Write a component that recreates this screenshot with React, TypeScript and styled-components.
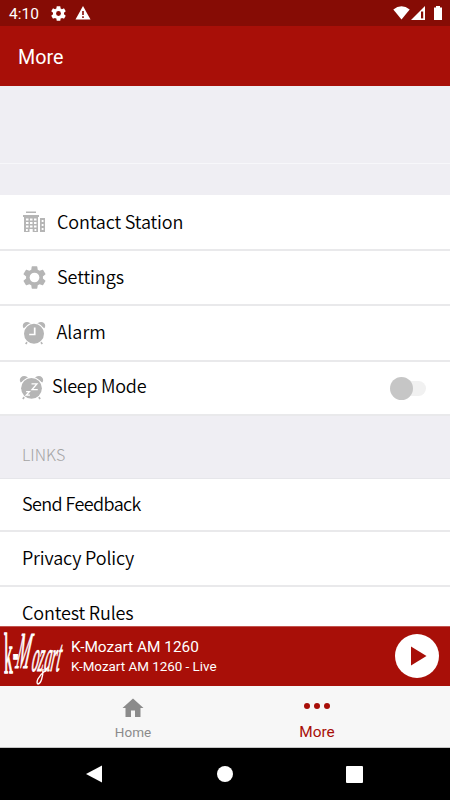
import React from 'react';
import styled, { createGlobalStyle } from 'styled-components';

const Global = createGlobalStyle`
  * { box-sizing: border-box; }
  body { margin: 0; background: #efeef3; }
  svg { display: block; flex: none; }
`;

const Screen = styled.div`
  width: 450px;
  height: 800px;
  display: flex;
  flex-direction: column;
  overflow: hidden;
  background: #efeef3;
  font-family: Roboto, sans-serif;
`;

const StatusBar = styled.div`
  height: 26px;
  flex: none;
  display: flex;
  align-items: center;
  padding: 0 7px 0 9px;
  background: #860c05;
  color: #fff;
`;

const Clock = styled.span`
  width: 42px;
  font-size: 15.5px;
  line-height: 20px;
  padding-top: 2px;
`;

const StatusGroup = styled.div<{ $end?: boolean }>`
  display: flex;
  align-items: center;
  gap: ${(p) => (p.$end ? 1 : 9)}px;
  margin-left: ${(p) => (p.$end ? 'auto' : '0')};
`;

const Header = styled.header`
  height: 60px;
  flex: none;
  padding: 19px 18px 0;
  background: #a80f08;
  color: #fff;
  font-size: 19.7px;
  line-height: 26px;
`;

const List = styled.main`
  flex: 1;
  min-height: 0;
  overflow: hidden;
  font-family: "Noto Sans CJK SC", sans-serif;
`;

const Banner = styled.div`
  height: 78px;
  border-bottom: 1px solid #f7f7fa;
`;

const Gap = styled.div`
  height: 31px;
`;

const Row = styled.div<{ $h: number; $left: number; $gap?: number; $shift?: number }>`
  height: ${(p) => p.$h}px;
  display: flex;
  align-items: center;
  gap: ${(p) => p.$gap ?? 0}px;
  padding: 0 24px ${(p) => p.$shift ?? 0}px ${(p) => p.$left}px;
  background: #fff;
  border-bottom: 2px solid #e9e9eb;
`;

const Label = styled.span<{ $track?: number; $up?: number }>`
  margin-bottom: ${(p) => p.$up ?? 3}px;
  font-size: 18px;
  font-weight: 350;
  line-height: 26px;
  letter-spacing: ${(p) => p.$track ?? 0}px;
  color: #000;
  white-space: nowrap;
`;

const Toggle = styled.div`
  width: 36px;
  height: 24px;
  display: flex;
  align-items: center;
  margin: 3px 0 0 auto;
`;

const Knob = styled.div`
  width: 23px;
  height: 23px;
  flex: none;
  border-radius: 50%;
  background: #c6c6c6;
  z-index: 1;
`;

const ToggleTrack = styled.div`
  width: 18px;
  height: 15px;
  margin: -1px 0 0 -5px;
  border-radius: 0 8px 8px 0;
  background: #f1f1f1;
`;

const SectionTitle = styled.h2`
  height: 63px;
  margin: 0;
  padding: 25px 0 0 22px;
  border-bottom: 1px solid #e6e6ea;
  font-size: 16px;
  font-weight: 300;
  line-height: 26px;
  color: #a4a4a4;
`;

const Player = styled.section`
  height: 60px;
  flex: none;
  display: flex;
  align-items: center;
  padding: 0 11px 1px 3px;
  background: #a80f08;
  border-top: 1px solid #c1544f;
  color: #fff;
`;

const NowPlaying = styled.div`
  flex: 1;
  padding: 2px 0 0 8px;
`;

const Title = styled.div`
  font-size: 15.4px;
  line-height: 19px;
`;

const Subtitle = styled.div`
  font-size: 13.4px;
  line-height: 19px;
`;

const PlayButton = styled.button`
  width: 44px;
  height: 44px;
  border: 0;
  border-radius: 50%;
  padding: 0 0 0 16px;
  background: #fff;
`;

const Tabs = styled.nav`
  height: 62px;
  flex: none;
  display: flex;
  padding: 0 41px;
  background: #f7f7f7;
  border-bottom: 1px solid #c4c4c4;
`;

const Tab = styled.div<{ $active?: boolean }>`
  flex: 1;
  display: flex;
  flex-direction: column;
  align-items: center;
  padding-top: 8px;
  gap: 1px;
  color: ${(p) => (p.$active ? '#a80f08' : '#8b8b8b')};
  font-size: ${(p) => (p.$active ? 15.4 : 13.5)}px;
  line-height: 26px;
`;

const SystemNav = styled.div`
  height: 52px;
  flex: none;
  display: flex;
  align-items: center;
  justify-content: space-between;
  padding: 0 87px 0 86px;
  background: #000;
`;

const GEAR =
  'M19.43 12.98c.04-.32.07-.64.07-.98s-.03-.66-.07-.98l2.11-1.65c.19-.15.24-.42.12-.64l-2-3.46c-.12-.22-.39-.3-.61-.22l-2.49 1c-.52-.4-1.08-.73-1.69-.98l-.38-2.65C14.46 2.18 14.25 2 14 2h-4c-.25 0-.46.18-.49.42l-.38 2.65c-.61.25-1.17.59-1.69.98l-2.49-1c-.23-.09-.49 0-.61.22l-2 3.46c-.13.22-.07.49.12.64l2.11 1.65c-.04.32-.07.65-.07.98s.03.66.07.98l-2.11 1.65c-.19.15-.24.42-.12.64l2 3.46c.12.22.39.3.61.22l2.49-1c.52.4 1.08.73 1.69.98l.38 2.65c.03.24.24.42.49.42h4c.25 0 .46-.18.49-.42l.38-2.65c.61-.25 1.17-.59 1.69-.98l2.49 1c.23.09.49 0 .61-.22l2-3.46c.12-.22.07-.49-.12-.64l-2.11-1.65z';

const Gear = ({ size, color, hole, r }: { size: number; color: string; hole: string; r: number }) => (
  <svg width={size} height={size} viewBox="1.8 1.8 20.4 20.4">
    <path fill={color} d={GEAR} />
    <circle cx="12" cy="12" r={r} fill={hole} />
  </svg>
);

const Building = () => (
  <svg width="24" height="22" viewBox="0 0 24 22" fill="#b5b5b5">
    <path d="M3 0.5h10v1.5h-10zM0 4h16v2h-1v15H1v-15H0zM17 7h5v14H17z" />
    <path
      fill="#fff"
      d="M3 7.5h2.5v2H3zM7 7.5h2.5v2H7zM11 7.5h2.5v2H11zM3 11h2.5v2H3zM7 11h2.5v2H7zM11 11h2.5v2H11zM3 14.5h2.5v2H3zM7 14.5h2.5v2H7zM11 14.5h2.5v2H11zM3 18h1.8v2H3zM6.5 18h3.2v3H6.5zM11.5 18h1.8v2h-1.8zM18.7 9h1.8v2h-1.8zM18.7 13h1.8v2h-1.8zM18.7 17h1.8v2h-1.8z"
    />
  </svg>
);

const AlarmClock = ({ size, sleeping }: { size: number; sleeping?: boolean }) => (
  <svg width={size} height={size} viewBox="0 0 24 24" fill="none">
    <path d="M6 20l-2.3 3M18 20l2.3 3" stroke="#b5b5b5" strokeWidth="1.7" />
    <path
      d="M1.600 7.200C-.600 4 2 .800 5 .900C7 1 8.500 2 9 3zM22.400 7.200C24.600 4 22 .800 19 .900C17 1 15.500 2 15 3z"
      fill="#b5b5b5"
    />
    <circle cx="12" cy="12.8" r="10.4" stroke="#fff" strokeWidth="1.2" />
    <circle cx="12" cy="12.8" r="10" fill="#b5b5b5" />
    {sleeping ? (
      <path d="M12 8.500h5.200l-4.700 5.500h5.500M6.800 16h3.200l-3 3.300h3.500" stroke="#fff" strokeWidth="1.3" />
    ) : (
      <path d="M12.700 6.500v7H7.200" stroke="#fff" strokeWidth="1.7" />
    )}
  </svg>
);

const LogoSvg = styled.svg`
  overflow: visible;
  font-family: "Liberation Serif", serif;
`;

const Logo = () => (
  <LogoSvg width="60" height="58" viewBox="3 627 60 58" fill="#fff" stroke="#fff">
    <text transform="translate(4 673) scale(.3 1)" fontSize="58" strokeWidth="1.4">
      k<tspan dy="-3">-</tspan>
    </text>
    <text transform="translate(15 668) skewX(-9) scale(.31 1)" fontSize="52" fontStyle="italic" strokeWidth="1">
      M
      <tspan x="52" dy="3" fontSize="44">o</tspan>
      <tspan x="73" fontSize="44">z</tspan>
      <tspan x="93" fontSize="44">a</tspan>
      <tspan x="114" fontSize="44">r</tspan>
      <tspan x="131" fontSize="46">t</tspan>
    </text>
    <path d="M43 669c0 8-2 14.500-5 15c-2.500-1 0-8 7-13" fill="none" strokeWidth="1.4" />
  </LogoSvg>
);

export default function App() {
  return (
    <Screen>
      <Global />
      <StatusBar>
        <Clock>4:10</Clock>
        <StatusGroup>
          <Gear size={15} color="#fff" hole="#860c05" r={3.3} />
          <svg width="16" height="14" viewBox="0 0 16 14">
            <path d="M8 0L15.500 13.500H.500z" fill="#fff" />
            <path d="M7.200 5h1.600v4H7.200zM7.200 10.300h1.600v1.700H7.200z" fill="#860c05" />
          </svg>
        </StatusGroup>
        <StatusGroup $end>
          <svg width="17" height="14" viewBox="0 0 17 14">
            <path d="M0.300 3.500Q8.500-3 16.700 3.500L8.500 13.500z" fill="#fff" />
          </svg>
          <svg width="14" height="14" viewBox="0 0 14 14">
            <path d="M14 0V14H0z" fill="#fff" />
            <path d="M10 5.500h2.200V12.400H10z" fill="#860c05" />
          </svg>
          <svg width="17" height="14" viewBox="0 0 17 14">
            <path d="M10 0h4v1.500h2V14h-8V1.500h2z" fill="#fff" />
          </svg>
        </StatusGroup>
      </StatusBar>
      <Header>More</Header>
      <List>
        <Banner />
        <Gap />
        <Row $h={56} $left={23} $gap={10}>
          <Building />
          <Label $up={3} $track={-0.15}>Contact Station</Label>
        </Row>
        <Row $h={55} $left={23} $gap={11}>
          <Gear size={23} color="#b5b5b5" hole="#fff" r={4.3} />
          <Label $track={-0.05}>Settings</Label>
        </Row>
        <Row $h={56} $left={22} $gap={10.5}>
          <AlarmClock size={24} />
          <Label $up={5}>Alarm</Label>
        </Row>
        <Row $h={54} $left={19} $gap={8} $shift={2}>
          <AlarmClock size={25} sleeping />
          <Label $up={4} $track={-0.25}>Sleep Mode</Label>
          <Toggle>
            <Knob />
            <ToggleTrack />
          </Toggle>
        </Row>
        <SectionTitle>LINKS</SectionTitle>
        <Row $h={53} $left={22}>
          <Label $track={-0.6}>Send Feedback</Label>
        </Row>
        <Row $h={55} $left={22}>
          <Label $track={-0.15}>Privacy Policy</Label>
        </Row>
        <Row $h={54} $left={22}>
          <Label $track={-0.15}>Contest Rules</Label>
        </Row>
      </List>
      <Player>
        <Logo />
        <NowPlaying>
          <Title>K-Mozart AM 1260</Title>
          <Subtitle>K-Mozart AM 1260 - Live</Subtitle>
        </NowPlaying>
        <PlayButton aria-label="Play">
          <svg width="16" height="20" viewBox="0 0 16 20">
            <path d="M0 .500L15.500 10L0 19.500z" fill="#a80f08" />
          </svg>
        </PlayButton>
      </Player>
      <Tabs>
        <Tab>
          <svg width="22" height="24" viewBox="0 0 22 24">
            <path d="M11 4.500L21.500 14H18.500V23H13V16.500H9V23H3.500V14H.500z" fill="#8b8b8b" />
          </svg>
          Home
        </Tab>
        <Tab $active>
          <svg width="28" height="24" viewBox="0 0 28 24" fill="#a80f08">
            <circle cx="4" cy="12" r="3" />
            <circle cx="14" cy="12" r="3" />
            <circle cx="24" cy="12" r="3" />
          </svg>
          More
        </Tab>
      </Tabs>
      <SystemNav>
        <svg width="17" height="18" viewBox="0 0 17 18">
          <path d="M16 .500V17.500L0 9z" fill="#fff" />
        </svg>
        <svg width="16" height="16" viewBox="0 0 16 16">
          <circle cx="8" cy="8" r="8" fill="#fff" />
        </svg>
        <svg width="17" height="17" viewBox="0 0 17 17">
          <rect width="17" height="17" rx="1" fill="#fff" />
        </svg>
      </SystemNav>
    </Screen>
  );
}
